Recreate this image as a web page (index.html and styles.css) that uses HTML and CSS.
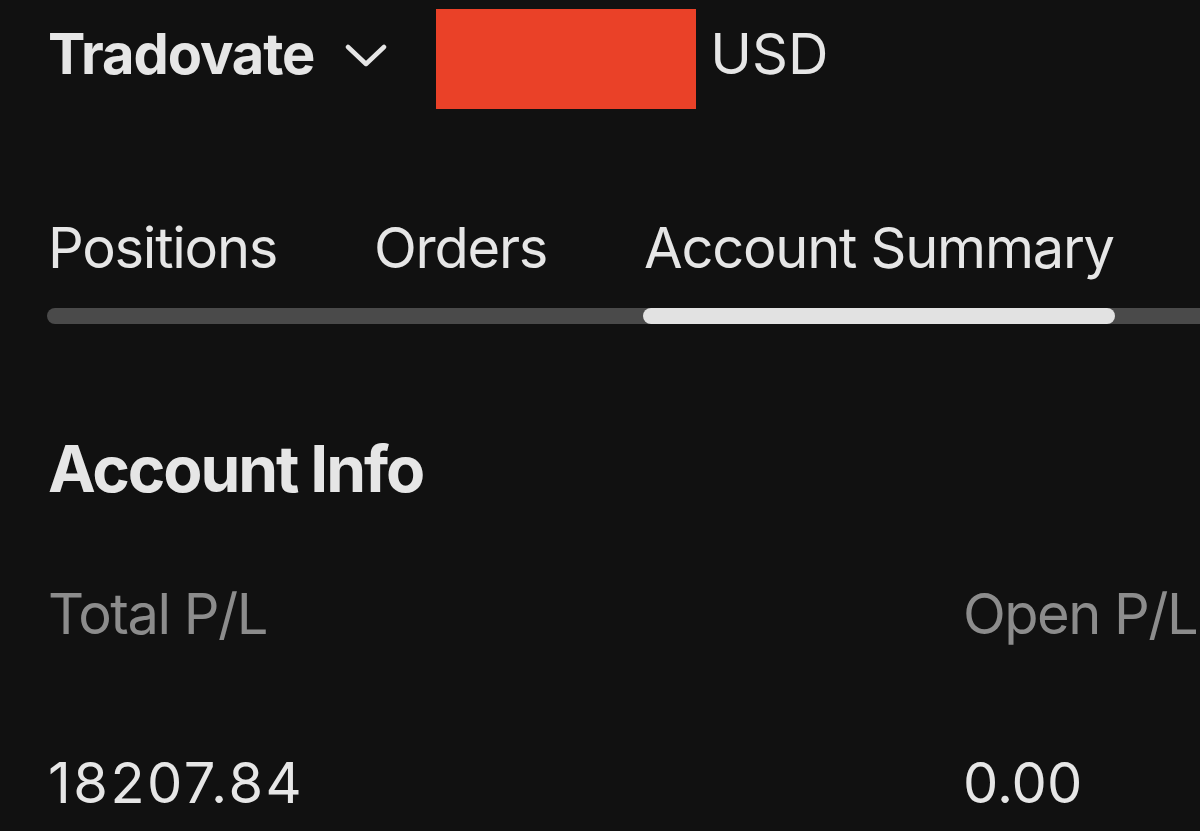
FILE: index.html
```html
<!DOCTYPE html>
<html lang="en">
<head>
  <meta charset="UTF-8" />
  <meta name="viewport" content="width=device-width, initial-scale=1.0" />
  <title>Account Summary</title>
  <link rel="stylesheet" href="styles.css">
</head>
<body>
  <div class="page">
    <div class="header">
      <div class="broker">
        <span class="broker-name">Tradovate</span>
        <svg class="chevron" width="44" height="24" viewBox="0 0 44 24">
          <polyline points="4,4 22,21 40,4" fill="none" stroke="#e6e6e6" stroke-width="4.5" stroke-linecap="round" stroke-linejoin="round" />
        </svg>
      </div>
      <div class="account-id"></div>
      <span class="currency">USD</span>
    </div>

    <div class="tabs">
      <div class="tab">Positions</div>
      <div class="tab">Orders</div>
      <div class="tab active">Account Summary</div>
      <div class="track"></div>
      <div class="indicator"></div>
    </div>

    <h2 class="section-title">Account Info</h2>

    <div class="stats">
      <div class="stat">
        <div class="stat-label">Total P/L</div>
        <div class="stat-value">18207.84</div>
      </div>
      <div class="stat">
        <div class="stat-label">Open P/L</div>
        <div class="stat-value short">0.00</div>
      </div>
    </div>
  </div>
</body>
</html>
```

FILE: styles.css
```css
html, body {
  margin: 0;
  padding: 0;
  overflow: hidden;
}
body {
  font-family: Inter, "Noto Sans", sans-serif;
  background-color: #111111;
  color: #e6e6e6;
  height: 100vh;
}
.page {
  padding: 9px 0 0 47px;
}
.header {
  display: flex;
  align-items: center;
  height: 100px;
}
.broker {
  display: flex;
  align-items: center;
  gap: 30px;
  padding-left: 1px;
}
.broker-name {
  font-size: 56px;
  font-weight: 700;
  letter-spacing: -1.1px;
  margin-bottom: 10px;
}
.chevron {
  margin-bottom: 8px;
}
.account-id {
  width: 260px;
  height: 100px;
  background-color: #ea4128;
  margin-left: 48px;
}
.currency {
  font-size: 56px;
  margin-left: 14px;
  margin-bottom: 10px;
}
.tabs {
  display: grid;
  grid-template-columns: auto auto auto 1fr;
  column-gap: 95px;
  margin-top: 101px;
  margin-right: -40px;
}
.tab {
  grid-row: 1;
  padding: 0 1px;
  font-size: 56px;
  line-height: 76px;
  letter-spacing: -1.25px;
  white-space: nowrap;
}
.track {
  grid-row: 2;
  grid-column: 1 / -1;
  height: 16px;
  margin-top: 22px;
  border-radius: 8px;
  background-color: #4a4a4a;
}
.indicator {
  grid-row: 2;
  grid-column: 3;
  height: 16px;
  margin-top: 22px;
  border-radius: 8px;
  background-color: #e2e2e2;
}
.section-title {
  margin: 105px 0 0 1px;
  font-size: 64px;
  font-weight: 700;
  letter-spacing: -2.1px;
  line-height: 80px;
}
.stats {
  display: grid;
  grid-template-columns: 915px 1fr;
  margin-top: 67px;
  padding-left: 1px;
}
.stat-label {
  font-size: 56px;
  line-height: 76px;
  letter-spacing: -1.5px;
  color: #8c8c8c;
  white-space: nowrap;
}
.stat-value {
  margin-top: 93px;
  font-size: 56px;
  line-height: 76px;
  letter-spacing: 2.5px;
  white-space: nowrap;
}
.stat-value.short {
  letter-spacing: 0;
}
```
